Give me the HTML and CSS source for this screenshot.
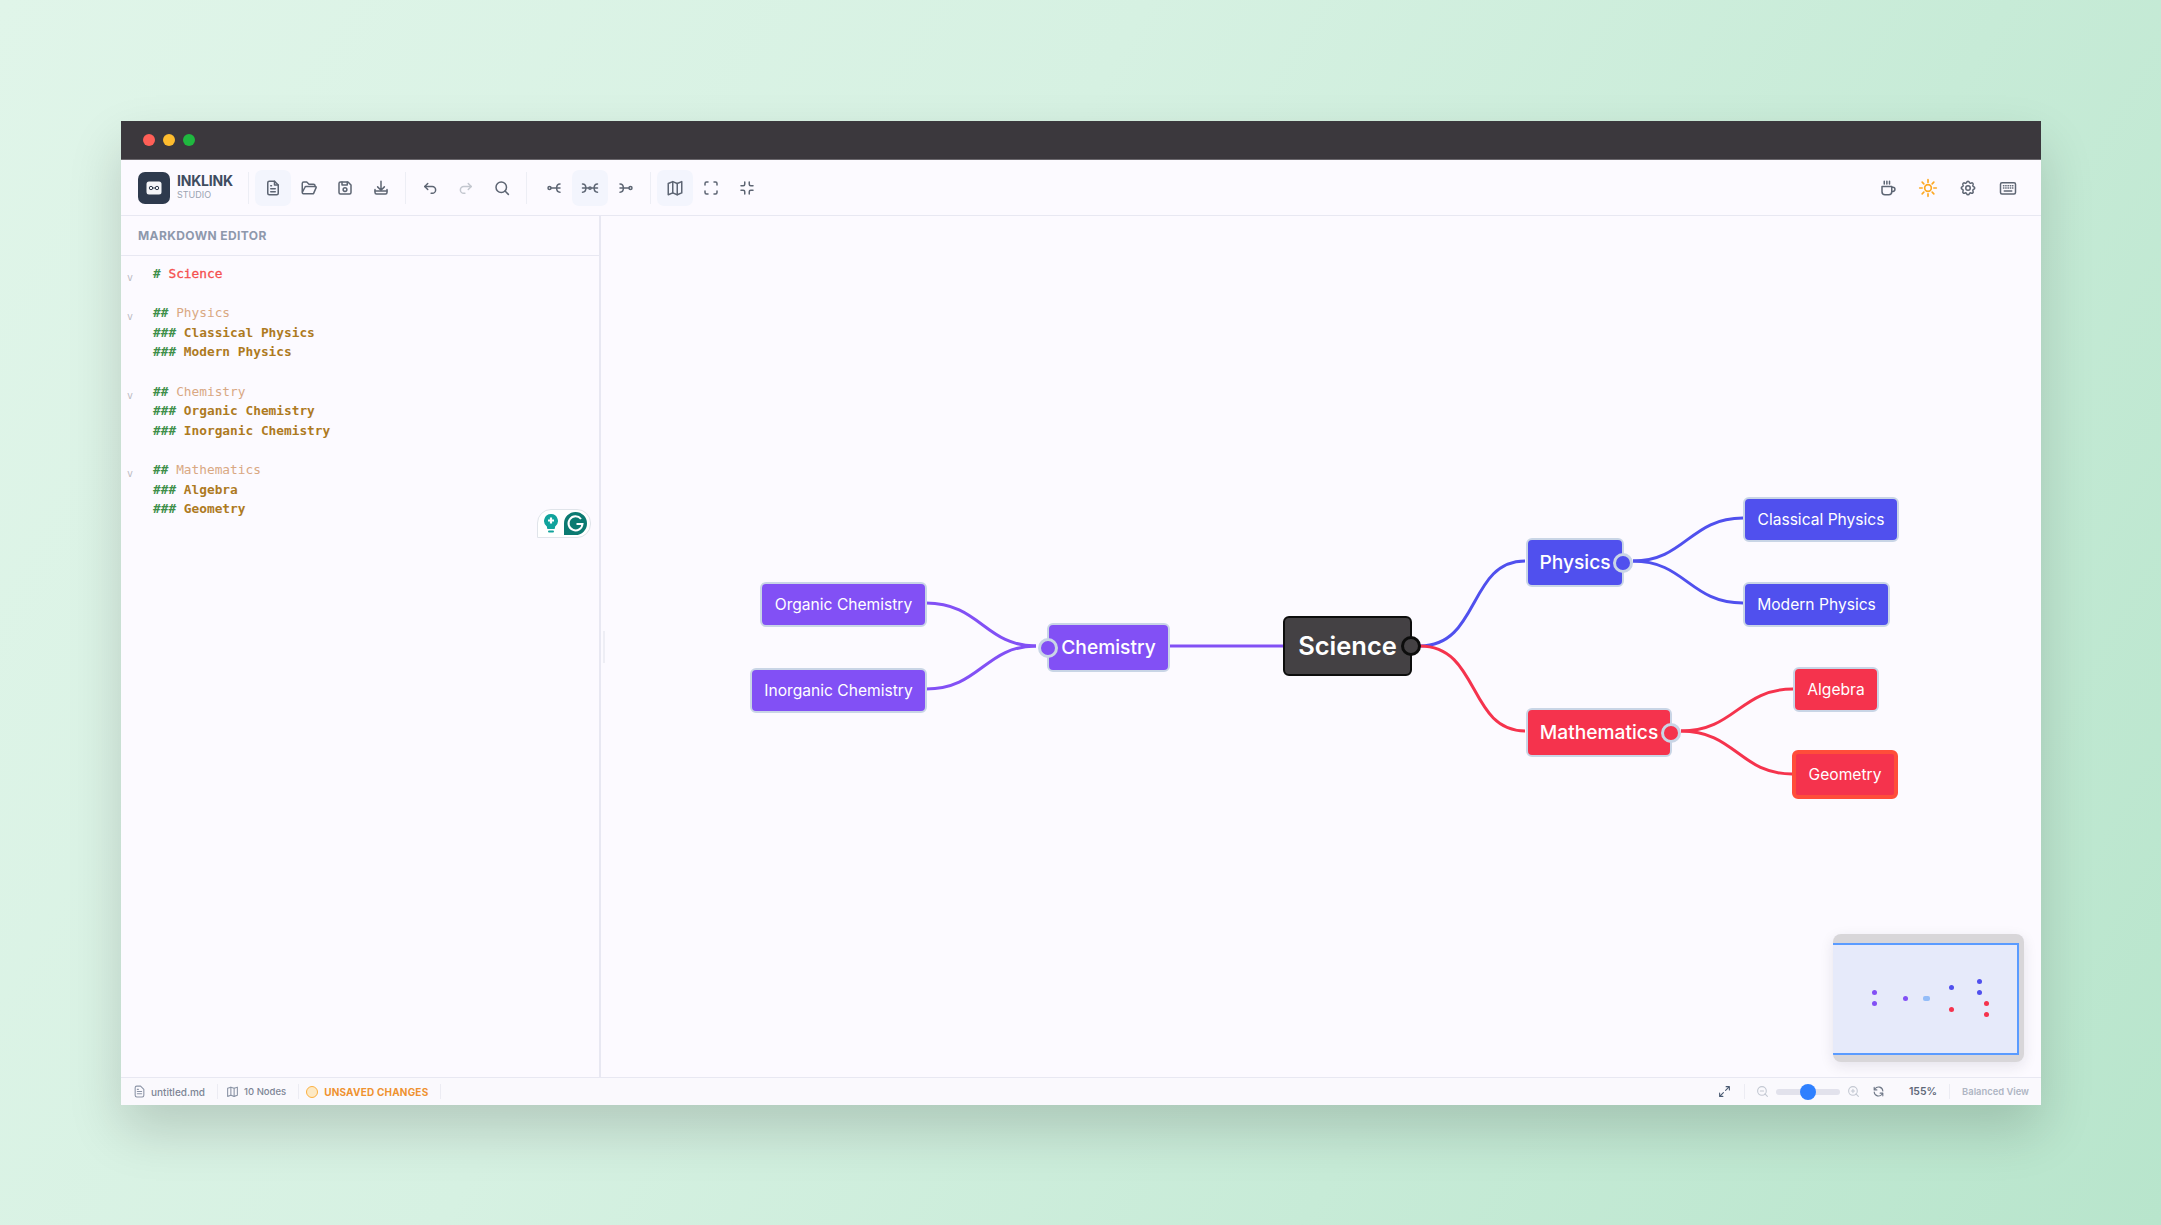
FILE: index.html
```html
<!DOCTYPE html>
<html lang="en">
<head>
<meta charset="utf-8">
<title>InkLink Studio</title>
<link rel="stylesheet" href="styles.css">
</head>
<body>
<div class="window">
  <div class="titlebar">
    <span class="dot dot-red"></span><span class="dot dot-yellow"></span><span class="dot dot-green"></span>
  </div>
  <header class="toolbar">
    <div class="brand">
      <div class="logo"><svg width="16" height="14" viewBox="0 0 16 14"><rect x="0.5" y="0.5" width="15" height="13" rx="2.5" fill="#f4f5f8"/><circle cx="5" cy="7" r="1.7" fill="none" stroke="#2f3a4c" stroke-width="1"/><circle cx="11" cy="7" r="1.7" fill="none" stroke="#2f3a4c" stroke-width="1"/><path d="M6.7 7h2.6" stroke="#2f3a4c"/></svg></div>
      <div class="brand-text"><div class="brand-name">INKLINK</div><div class="brand-sub">STUDIO</div></div>
    </div>
    <span class="sep"></span>
    <button class="btn active"><svg class="ic" viewBox="0 0 24 24"><path d="M14 3H7a2 2 0 0 0-2 2v14a2 2 0 0 0 2 2h10a2 2 0 0 0 2-2V8z"/><path d="M14 3v5h5M9 9h1M9 13h6M9 17h6"/></svg></button>
    <button class="btn"><svg class="ic" viewBox="0 0 24 24"><path d="M3 17V6a2 2 0 0 1 2-2h4l3 3h6a2 2 0 0 1 2 2v1"/><path d="M3 18a1.500 1.500 0 0 0 1.500 1.500H18l3.500-8a1 1 0 0 0-1-1.500H8a1.500 1.500 0 0 0-1.400 1z"/></svg></button>
    <button class="btn"><svg class="ic" viewBox="0 0 24 24"><path d="M6 4h10l4 4v10a2 2 0 0 1-2 2H6a2 2 0 0 1-2-2V6a2 2 0 0 1 2-2z"/><circle cx="12" cy="14" r="2.500"/><path d="M8 4v4h7V4"/></svg></button>
    <button class="btn"><svg class="ic" viewBox="0 0 24 24"><path d="M4 14v4a2 2 0 0 0 2 2h12a2 2 0 0 0 2-2v-4"/><path d="M12 3v12M7.500 10.500L12 15l4.500-4.500"/><path d="M4 16h16"/></svg></button>
    <span class="sep"></span>
    <button class="btn"><svg class="ic" viewBox="0 0 24 24"><path d="M9 14L5 10l4-4"/><path d="M5 10h10a4.500 4.500 0 0 1 0 9h-1.500"/></svg></button>
    <button class="btn"><svg class="ic ic-off" viewBox="0 0 24 24"><path d="M15 14l4-4-4-4"/><path d="M19 10H9a4.500 4.500 0 0 0 0 9h1.500"/></svg></button>
    <button class="btn"><svg class="ic" viewBox="0 0 24 24"><circle cx="11" cy="11" r="7"/><path d="M20.500 20.500L16 16"/></svg></button>
    <span class="sep sep-branch"></span>
    <button class="btn"><svg class="ic" viewBox="0 0 24 24"><circle cx="6" cy="12" r="2"/><path d="M8 12h12"/><path d="M20 6.500c-3 0-4.500 2.500-4.500 5.500s1.500 5.500 4.500 5.500"/></svg></button>
    <button class="btn active"><svg class="ic" viewBox="0 0 24 24"><path d="M2 6.500c3 0 4.500 2.500 4.500 5.500s-1.500 5.500-4.500 5.500"/><path d="M2 12h8M14 12h8"/><path d="M22 6.500c-3 0-4.500 2.500-4.500 5.500s1.500 5.500 4.500 5.500"/><circle cx="12" cy="12" r="1.500"/></svg></button>
    <button class="btn"><svg class="ic" viewBox="0 0 24 24"><circle cx="18" cy="12" r="2"/><path d="M16 12H4"/><path d="M4 6.500c3 0 4.500 2.500 4.500 5.500S7 17.500 4 17.500"/></svg></button>
    <span class="sep"></span>
    <button class="btn active"><svg class="ic" viewBox="0 0 24 24"><path d="M3 6l6-2.500 6 2.500 6-2.500v15l-6 2.500-6-2.500-6 2.500z"/><path d="M9 3.500v15M15 6v15"/></svg></button>
    <button class="btn"><svg class="ic" viewBox="0 0 24 24"><path d="M4 8V6a2 2 0 0 1 2-2h2M16 4h2a2 2 0 0 1 2 2v2M20 16v2a2 2 0 0 1-2 2h-2M8 20H6a2 2 0 0 1-2-2v-2"/></svg></button>
    <button class="btn"><svg class="ic" viewBox="0 0 24 24"><path d="M4 9h3a2 2 0 0 0 2-2V4M15 4v3a2 2 0 0 0 2 2h3M20 15h-3a2 2 0 0 0-2 2v3M9 20v-3a2 2 0 0 0-2-2H4"/></svg></button>
    <div class="toolbar-right">
      <button class="btn-r"><svg class="ic" viewBox="0 0 24 24"><path d="M4 10h13v7a4 4 0 0 1-4 4H8a4 4 0 0 1-4-4z"/><path d="M17 11h1.500a2.500 2.500 0 0 1 0 5.500H17"/><path d="M7 3v3.500M10.500 3v3.500M14 3v3.500"/></svg></button>
      <button class="btn-r"><svg class="ic ic-sun" viewBox="0 0 24 24"><circle cx="12" cy="12" r="4"/><path d="M12 2v3M12 19v3M2 12h3M19 12h3M5 5l2 2M17 17l2 2M5 19l2-2M17 7l2-2"/></svg></button>
      <button class="btn-r"><svg class="ic" viewBox="0 0 24 24"><path d="M10.300 4.300c.400-1.700 3-1.700 3.400 0a1.700 1.700 0 0 0 2.600 1.100c1.500-.900 3.300.800 2.400 2.400a1.700 1.700 0 0 0 1 2.600c1.700.400 1.700 3 0 3.400a1.700 1.700 0 0 0-1 2.600c.900 1.500-.900 3.300-2.400 2.400a1.700 1.700 0 0 0-2.600 1c-.400 1.700-3 1.700-3.400 0a1.700 1.700 0 0 0-2.600-1c-1.500.900-3.300-.900-2.400-2.400a1.700 1.700 0 0 0-1-2.600c-1.700-.400-1.700-3 0-3.400a1.700 1.700 0 0 0 1-2.600c-.900-1.500.900-3.300 2.400-2.400a1.700 1.700 0 0 0 2.600-1.100z"/><circle cx="12" cy="12" r="3"/></svg></button>
      <button class="btn-r"><svg class="ic" viewBox="0 0 24 24"><rect x="2" y="5" width="20" height="15" rx="2"/><path d="M6 9h.500M9 9h.500M12 9h.500M15 9h.500M18 9h.500M6 12h.500M9 12h.500M12 12h.500M15 12h.500M18 12h.500M7 16h10"/></svg></button>
    </div>
  </header>
  <div class="main">
    <aside class="sidebar">
      <div class="side-head">MARKDOWN EDITOR</div>
      <div class="editor">
        <div class="line"><span class="fold">v</span><span class="h">#</span> <span class="t1">Science</span></div>
        <div class="line"></div>
        <div class="line"><span class="fold">v</span><span class="h">##</span> <span class="t2">Physics</span></div>
        <div class="line"><span class="h">###</span> <span class="t3">Classical Physics</span></div>
        <div class="line"><span class="h">###</span> <span class="t3">Modern Physics</span></div>
        <div class="line"></div>
        <div class="line"><span class="fold">v</span><span class="h">##</span> <span class="t2">Chemistry</span></div>
        <div class="line"><span class="h">###</span> <span class="t3">Organic Chemistry</span></div>
        <div class="line"><span class="h">###</span> <span class="t3">Inorganic Chemistry</span></div>
        <div class="line"></div>
        <div class="line"><span class="fold">v</span><span class="h">##</span> <span class="t2">Mathematics</span></div>
        <div class="line"><span class="h">###</span> <span class="t3">Algebra</span></div>
        <div class="line"><span class="h">###</span> <span class="t3">Geometry</span></div>
      </div>
      <div class="grammarly">
        <svg width="16" height="22" viewBox="0 0 16 22"><path d="M8 1a7 7 0 0 1 4 12.700V15a1 1 0 0 1-1 1H5a1 1 0 0 1-1-1v-1.300A7 7 0 0 1 8 1z" fill="#11a39c"/><path d="M8 4.500v6M5 7.500h6" stroke="#fff" stroke-width="2.200"/><rect x="5" y="17.500" width="6" height="2" rx="1" fill="#11a39c"/></svg>
        <svg width="23" height="23" viewBox="0 0 23 23"><path d="M11.500 0a11.500 11.500 0 1 1 0 23H0V11.500A11.500 11.500 0 0 1 11.500 0z" fill="#0b7a71"/><path d="M17 7a7 7 0 1 0 1.500 5h-6" fill="none" stroke="#fff" stroke-width="2"/></svg>
      </div>
    </aside>
    <section class="canvas">
      <svg class="edges" viewBox="0 0 1440 863" width="1440" height="863">
        <g fill="none" stroke-width="3">
          <path stroke="#8250f5" d="M566 431H683"/>
          <path stroke="#8250f5" d="M436 431C385 431 380 388 326 388"/>
          <path stroke="#8250f5" d="M436 431C385 431 380 474 326 474"/>
          <path stroke="#5050ee" d="M820 431C880 431 868 346 925 346"/>
          <path stroke="#f5334d" d="M820 431C880 431 868 516 925 516"/>
          <path stroke="#5050ee" d="M1033 346C1085 346 1090 303 1143 303"/>
          <path stroke="#5050ee" d="M1033 346C1085 346 1090 388 1143 388"/>
          <path stroke="#f5334d" d="M1081 516C1135 516 1140 474 1193 474"/>
          <path stroke="#f5334d" d="M1081 516C1135 516 1140 559 1192 559"/>
        </g>
      </svg>
      <div class="node root n-science">Science<span class="handle h-root"></span></div>
      <div class="node sub blue n-physics">Physics<span class="handle h-right"></span></div>
      <div class="node sub red n-math">Mathematics<span class="handle h-right"></span></div>
      <div class="node sub purple n-chem">Chemistry<span class="handle h-left"></span></div>
      <div class="node leaf blue n-classical">Classical Physics</div>
      <div class="node leaf blue n-modern">Modern Physics</div>
      <div class="node leaf red n-algebra">Algebra</div>
      <div class="node leaf red selected n-geometry">Geometry</div>
      <div class="node leaf purple n-organic">Organic Chemistry</div>
      <div class="node leaf purple n-inorganic">Inorganic Chemistry</div>
      <span class="resizer"></span>
      <div class="minimap">
        <div class="viewport"></div>
        <span class="md purple-d m1"></span><span class="md purple-d m2"></span><span class="md purple-d m3"></span>
        <span class="md center-d m4"></span>
        <span class="md blue-d m5"></span><span class="md blue-d m6"></span><span class="md blue-d m7"></span>
        <span class="md red-d m8"></span><span class="md red-d m9"></span><span class="md red-d m10"></span>
      </div>
    </section>
  </div>
  <footer class="status">
    <div class="st-item"><svg class="st-ic" viewBox="0 0 24 24"><path d="M14 2H7a3 3 0 0 0-3 3v14a3 3 0 0 0 3 3h10a3 3 0 0 0 3-3V8z"/><path d="M8 12h8M8 16h8M8 8h2"/></svg><span>untitled.md</span></div>
    <span class="st-sep"></span>
    <div class="st-item nodes"><svg class="st-ic" viewBox="0 0 24 24"><path d="M3 6l6-2 6 2 6-2v15l-6 2-6-2-6 2z"/><path d="M9 4v15M15 6v15"/></svg><span>10 Nodes</span></div>
    <span class="st-sep sep-tight"></span>
    <div class="st-item unsaved"><span class="ring"></span><span>UNSAVED CHANGES</span></div>
    <span class="st-sep"></span>
    <div class="st-right">
      <svg class="st-ic dark" viewBox="0 0 24 24"><path d="M14 10l7-7M15 3h6v6M10 14l-7 7M3 15v6h6"/></svg>
      <span class="st-sep sep-zoom"></span>
      <svg class="st-ic faint" viewBox="0 0 24 24"><circle cx="11" cy="11" r="8"/><path d="M21 21l-4.500-4.500M8 11h6"/></svg>
      <div class="slider"><span class="thumb"></span></div>
      <svg class="st-ic faint" viewBox="0 0 24 24"><circle cx="11" cy="11" r="8"/><path d="M21 21l-4.500-4.500M8 11h6M11 8v6"/></svg>
      <svg class="st-ic reset" viewBox="0 0 24 24"><path d="M20 11A8 8 0 0 0 5.500 7L4 9M4 4v5h5M4 13a8 8 0 0 0 14.500 4L20 15M20 20v-5h-5"/></svg>
      <span class="pct">155%</span>
      <span class="st-sep sep-view"></span>
      <span class="view">Balanced View</span>
    </div>
  </footer>
</div>
</body>
</html>
```
FILE: styles.css
```css
* { box-sizing: border-box; }
html, body { margin: 0; height: 100%; }
body {
  width: 2161px;
  height: 1225px;
  overflow: hidden;
  padding: 121px 120px 120px 121px;
  background: linear-gradient(120deg, #e0f5e9 0%, #d6f1e2 40%, #b8e5cc 100%);
  font-family: Inter, "Noto Sans", sans-serif;
}
.window {
  width: 1920px;
  height: 984px;
  display: flex;
  flex-direction: column;
  background: #fcfaff;
  box-shadow: 0 25px 50px rgba(0, 0, 0, .16);
}
.titlebar {
  height: 39px;
  flex: none;
  display: flex;
  align-items: center;
  gap: 8px;
  padding-left: 22px;
  background: #3b383d;
  border-bottom: 1px solid #6b686d;
}
.dot { width: 12px; height: 12px; border-radius: 50%; }
.dot-red { background: #ff5f57; }
.dot-yellow { background: #febc2e; }
.dot-green { background: #1fb83f; }
.toolbar {
  height: 56px;
  flex: none;
  display: flex;
  align-items: center;
  padding: 0 13px 0 17px;
  border-bottom: 1px solid #e8e8f2;
}
.brand { display: flex; align-items: center; gap: 7px; width: 104px; }
.logo {
  width: 32px;
  height: 32px;
  border-radius: 7px;
  background: #2e3a4d;
  display: flex;
  align-items: center;
  justify-content: center;
}
.brand-text { margin-top: -2px; }
.brand-name { font-size: 14px; font-weight: 700; color: #3f4c60; line-height: 16px; letter-spacing: -.2px; }
.brand-sub { font-size: 9px; color: #9aa3b2; line-height: 12px; }
.sep { width: 1px; height: 32px; background: #edeef5; margin: 0 6px; flex: none; }
.sep-branch { margin: 0 9px 0 6px; }
.btn, .btn-r {
  width: 36px;
  height: 36px;
  flex: none;
  border: 0;
  padding: 0;
  background: none;
  border-radius: 7px;
  display: flex;
  align-items: center;
  justify-content: center;
}
.btn.active { background: #f3f5fd; }
.btn-r { width: 40px; }
.ic { width: 18px; height: 18px; fill: none; stroke: #5d6573; stroke-width: 2; stroke-linecap: round; stroke-linejoin: round; }
.ic-off { stroke: #c3c7cf; }
.ic-sun { width: 20px; height: 20px; stroke: #fda823; }
.toolbar-right { margin-left: auto; display: flex; }
.main { flex: 1; display: flex; min-height: 0; }
.sidebar {
  width: 480px;
  flex: none;
  position: relative;
  border-right: 2px solid #e8e8f2;
}
.side-head {
  height: 40px;
  padding-left: 17px;
  display: flex;
  align-items: center;
  font-size: 12px;
  font-weight: 700;
  letter-spacing: .4px;
  color: #8e98ac;
  border-bottom: 1px solid #e8e8f2;
}
.editor { padding: 8px 0 0 32px; font-family: "DejaVu Sans Mono", monospace; font-size: 12.8px; }
.line { height: 19.6px; line-height: 19.6px; white-space: pre; position: relative; font-weight: 700; }
.fold { position: absolute; left: -26px; top: 4px; font-size: 10px; font-weight: 400; color: #bcbcc4; }
.h { color: #3e8f4a; }
.t1 { color: #f5504f; font-weight: 400; -webkit-text-stroke: .3px #f5504f; }
.t2 { color: #d9a883; font-weight: 400; }
.t3 { color: #ae7a1f; }
.grammarly {
  position: absolute;
  left: 416px;
  top: 293px;
  width: 54px;
  height: 29px;
  padding-left: 5px;
  display: flex;
  align-items: center;
  gap: 5px;
  background: #fff;
  border: 1px solid #e0e4ea;
  border-radius: 14px 14px 14px 0;
}
.canvas { flex: 1; position: relative; overflow: hidden; }
.edges { position: absolute; left: -1px; top: -1px; }
.node {
  position: absolute;
  display: flex;
  align-items: center;
  justify-content: center;
  color: #fff;
  border-radius: 6px;
  border: 2px solid #c9d5e6;
  font-weight: 400;
  white-space: nowrap;
}
.leaf { height: 45px; font-size: 15.6px; }
.sub { height: 49px; padding-bottom: 2px; font-size: 19.2px; font-weight: 500; }
.root { height: 60px; padding-bottom: 1px; font-size: 25.5px; font-weight: 600; background: #444144; border-color: #0d0d0d; }
.blue { background: #5050ee; }
.red { background: #f5334d; }
.purple { background: #8250f5; }
.selected { height: 49px; border: 4px solid #ff4d3a; }
.n-science { left: 682px; top: 400px; width: 129px; }
.n-physics { left: 925px; top: 322px; width: 98px; }
.n-math { left: 925px; top: 492px; width: 146px; }
.n-chem { left: 446px; top: 407px; width: 123px; }
.n-classical { left: 1142px; top: 281px; width: 156px; }
.n-modern { left: 1142px; top: 366px; width: 147px; }
.n-algebra { left: 1192px; top: 451px; width: 86px; }
.n-geometry { left: 1191px; top: 534px; width: 106px; }
.n-organic { left: 159px; top: 366px; width: 167px; }
.n-inorganic { left: 149px; top: 452px; width: 177px; }
.handle {
  position: absolute;
  top: 50%;
  width: 20px;
  height: 20px;
  margin-top: -10px;
  border-radius: 50%;
  border: 3px solid #c9d5e6;
}
.h-right { right: -11px; }
.h-left { left: -11px; }
.blue .handle { background: #5050ee; }
.red .handle { background: #f5334d; }
.purple .handle { background: #8250f5; }
.h-root { right: -11px; background: #444144; border-color: #0d0d0d; }
.resizer { position: absolute; left: 2px; top: 415px; width: 2px; height: 32px; background: #eeeef5; }
.minimap {
  position: absolute;
  left: 1232px;
  top: 718px;
  width: 191px;
  height: 128px;
  background: #d8d6d9;
  border-radius: 8px;
  overflow: hidden;
  box-shadow: 0 4px 14px rgba(30, 30, 60, .1);
}
.viewport { position: absolute; left: -2px; top: 9px; width: 188px; height: 112px; background: #e6eafa; border: 2px solid #5a9bff; }
.md { position: absolute; width: 5px; height: 5px; border-radius: 50%; }
.purple-d { background: #8250f5; }
.blue-d { background: #5050ee; }
.red-d { background: #f5334d; }
.center-d { width: 7px; height: 5px; border-radius: 2px; background: #94bdf8; }
.m1 { left: 39px; top: 56px; }
.m2 { left: 39px; top: 67px; }
.m3 { left: 70px; top: 62px; }
.m4 { left: 90px; top: 62px; }
.m5 { left: 116px; top: 51px; }
.m6 { left: 144px; top: 45px; }
.m7 { left: 144px; top: 56px; }
.m8 { left: 116px; top: 73px; }
.m9 { left: 151px; top: 67px; }
.m10 { left: 151px; top: 78px; }
.status {
  height: 28px;
  flex: none;
  display: flex;
  align-items: center;
  padding: 0 12px 0 12px;
  background: #faf9fd;
  border-top: 1px solid #e8e8f2;
  font-size: 10px;
  color: #7d8595;
}
.st-item { display: flex; align-items: center; gap: 5px; font-weight: 500; }
.nodes { font-size: 9.5px; }
.st-ic { width: 13px; height: 13px; fill: none; stroke: #8b94a6; stroke-width: 2; stroke-linecap: round; stroke-linejoin: round; flex: none; }
.st-sep { width: 1px; height: 15px; background: #ececf3; margin: 0 8px 0 12px; flex: none; }
.sep-tight { margin: 0 7px 0 12px; }
.unsaved { color: #ef9230; font-weight: 700; letter-spacing: .2px; gap: 6px; }
.ring { width: 12px; height: 12px; border-radius: 50%; border: 1.5px solid #fbb040; background: #fde9c4; }
.st-right { margin-left: auto; display: flex; align-items: center; }
.dark { stroke: #4a5a72; }
.faint { stroke: #c3c8d2; }
.sep-zoom { margin: 0 11px 0 13px; }
.sep-view { margin: 0 12px; }
.slider { position: relative; width: 64px; height: 6px; margin: 0 7px; border-radius: 3px; background: #e2e2ec; }
.thumb { position: absolute; left: 24px; top: -5px; width: 16px; height: 16px; border-radius: 50%; background: #2f80ff; }
.reset { stroke: #6e7787; margin-left: 12px; }
.pct { margin-left: 24px; font-size: 10.5px; font-weight: 600; color: #5f6878; }
.view { font-size: 9.4px; font-weight: 600; color: #aeb5c3; }
```
